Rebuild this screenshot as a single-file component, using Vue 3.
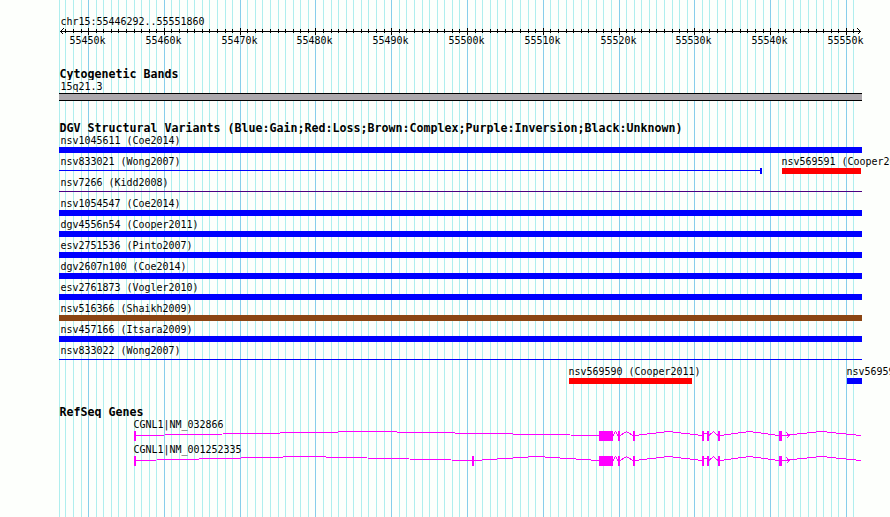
<template>
  <div class="browser">
    <svg class="grid" width="890" height="517">
      <rect v-for="x in minorLines" :key="'m' + x" :x="x" y="0" width="1" height="517" class="minor" />
      <rect v-for="x in majorLines" :key="'M' + x" :x="x" y="0" width="1" height="517" class="major" />
    </svg>

    <svg class="ruler" width="890" height="66">
      <text x="60.5" y="25" class="label" v-bind="fit('chr15:55446292..55551860', 6)">chr15:55446292..55551860</text>
      <rect x="60" y="31" width="801" height="1" />
      <path class="arrow" d="M63.5 28.5L60.5 31.5L63.5 34.5M857.5 28.5L860.5 31.5L857.5 34.5" />
      <rect v-for="x in minorLines.slice(1)" :key="'t' + x" :x="x" y="29" width="1" height="4" />
      <g v-for="(x, i) in majorLines" :key="'T' + x">
        <rect :x="x" y="28" width="1" height="7" />
        <text :x="x - 18.5" y="44" class="label" v-bind="fit('55450k', 6)">{{ 55450 + i * 10 }}k</text>
      </g>
    </svg>

    <section class="track">
      <svg class="heading" width="890" height="14">
        <text x="59.5" y="12" class="title" v-bind="fit('Cytogenetic Bands', 7)">Cytogenetic Bands</text>
      </svg>
      <svg class="row" width="890" height="21">
        <text x="60.5" y="10" class="label" v-bind="fit('15q21.3', 6)">15q21.3</text>
        <rect x="59" y="13" width="803" height="8" />
        <rect x="59" y="14" width="803" height="6" class="band" />
      </svg>
    </section>

    <section class="track">
      <svg class="heading" width="890" height="14">
        <text x="59.5" y="12" class="title" v-bind="fit(variantTitle, 7)">{{ variantTitle }}</text>
      </svg>
      <svg v-for="(row, i) in variants" :key="i" class="row" width="890" height="21">
        <g v-for="v in row" :key="v.name" :class="v.type">
          <text :x="v.label" y="10" class="label" v-bind="fit(v.name, 6)">{{ v.name }}</text>
          <rect v-if="v.thin" :x="v.start" y="15" :width="v.end - v.start" height="1" />
          <rect v-else :x="v.start" y="13" :width="v.end - v.start" height="6" />
          <rect v-if="v.cap" :x="v.end - 2" y="13" width="2" height="6" />
        </g>
      </svg>
    </section>

    <section class="track">
      <svg class="heading" width="890" height="14">
        <text x="59.5" y="12" class="title" v-bind="fit('RefSeq Genes', 7)">RefSeq Genes</text>
      </svg>
      <svg v-for="gene in genes" :key="gene.name" class="row gene" width="890" height="25">
        <text x="133.5" y="10" class="label" v-bind="fit(gene.name, 6)">{{ gene.name }}</text>
        <path :d="intronPath(gene.exons)" class="intron" />
        <path d="M782 17.5H790M786.5 14.5L789.5 17.5L786.5 20.5" class="intron" />
        <rect v-for="e in gene.exons" :key="e[0]" :x="e[0]" y="13" :width="e[1]" height="10" />
      </svg>
    </section>
  </div>
</template>

<script setup>
// 800px cover 105568 bases, starting at x = 60
const toX = (pos) => Math.round(60 + ((pos - 55446292) / 105568) * 800);

const majorLines = [];
const minorLines = [59];
for (let kb = 55447; kb <= 55551; kb++) {
  if (kb % 10 === 0) majorLines.push(toX(kb * 1000));
  else minorLines.push(toX(kb * 1000));
}

// fixed character cell for the labels
const fit = (text, cell) => ({
  textLength: text.length * cell,
  lengthAdjust: 'spacingAndGlyphs',
});

const variantTitle =
  'DGV Structural Variants (Blue:Gain;Red:Loss;Brown:Complex;Purple:Inversion;Black:Unknown)';

const full = (name, type = 'gain', thin = false) => ({ name, type, thin, label: 60.5, start: 59, end: 862 });

const variants = [
  [full('nsv1045611 (Coe2014)')],
  [
    { ...full('nsv833021 (Wong2007)', 'gain', true), end: 762, cap: true },
    { name: 'nsv569591 (Cooper2011)', type: 'loss', label: 781.5, start: 782, end: 861 },
  ],
  [full('nsv7266 (Kidd2008)', 'inversion', true)],
  [full('nsv1054547 (Coe2014)')],
  [full('dgv4556n54 (Cooper2011)')],
  [full('esv2751536 (Pinto2007)')],
  [full('dgv2607n100 (Coe2014)')],
  [full('esv2761873 (Vogler2010)')],
  [full('nsv516366 (Shaikh2009)', 'complex')],
  [full('nsv457166 (Itsara2009)')],
  [full('nsv833022 (Wong2007)', 'gain', true)],
  [
    { name: 'nsv569590 (Cooper2011)', type: 'loss', label: 568.5, start: 569, end: 692 },
    { name: 'nsv569592 (Cooper2011)', type: 'gain', label: 846.5, start: 847, end: 862 },
  ],
];

// exons as [x, width]
const lastExons = [[599, 14], [618, 2], [633, 2], [702, 2], [707, 2], [718, 2], [779, 3]];
const genes = [
  { name: 'CGNL1|NM_032866', exons: [[134, 2], ...lastExons] },
  { name: 'CGNL1|NM_001252335', exons: [[134, 2], [472, 2], ...lastExons] },
];

// hat-shaped line between neighbouring exons
function intronPath(exons) {
  return exons
    .map(([x, w], i) => {
      const from = x + w;
      const to = i + 1 < exons.length ? exons[i + 1][0] : 861;
      if (to - from < 4) return `M${from} 15.5H${to}`;
      return `M${from} 17.5L${(from + to) / 2} 13.5L${to} 17.5`;
    })
    .join('');
}
</script>

<style>
body {
  margin: 0;
  background: #fdfffc;
}
</style>

<style scoped>
.browser {
  position: relative;
  width: 890px;
  height: 517px;
  overflow: hidden;
  display: flex;
  flex-direction: column;
  background: #fdfffc;
}

svg {
  display: block;
  position: relative;
  flex-shrink: 0;
  shape-rendering: crispEdges;
}

.grid {
  position: absolute;
  top: 0;
  left: 0;
}

.minor {
  fill: #afeeee;
}

.major {
  fill: #87ceeb;
}

.track {
  display: flex;
  flex-direction: column;
  margin-bottom: 19px;
}

.track + .track {
  margin-bottom: 18px;
}

.label {
  font-family: "DejaVu Sans Mono", monospace;
  font-size: 10.8px;
  fill: #000;
}

.title {
  font-family: "DejaVu Sans Mono", monospace;
  font-size: 11.6px;
  font-weight: bold;
}

.arrow {
  fill: none;
  stroke: #000;
}

.band {
  fill: #aca8ac;
}

.gain {
  fill: #0000ff;
}

.loss {
  fill: #ff0000;
}

.complex {
  fill: #8b4513;
}

.inversion {
  fill: #4b0082;
}

.gene {
  fill: #ff00ff;
}

.intron {
  fill: none;
  stroke: #ff00ff;
}
</style>
